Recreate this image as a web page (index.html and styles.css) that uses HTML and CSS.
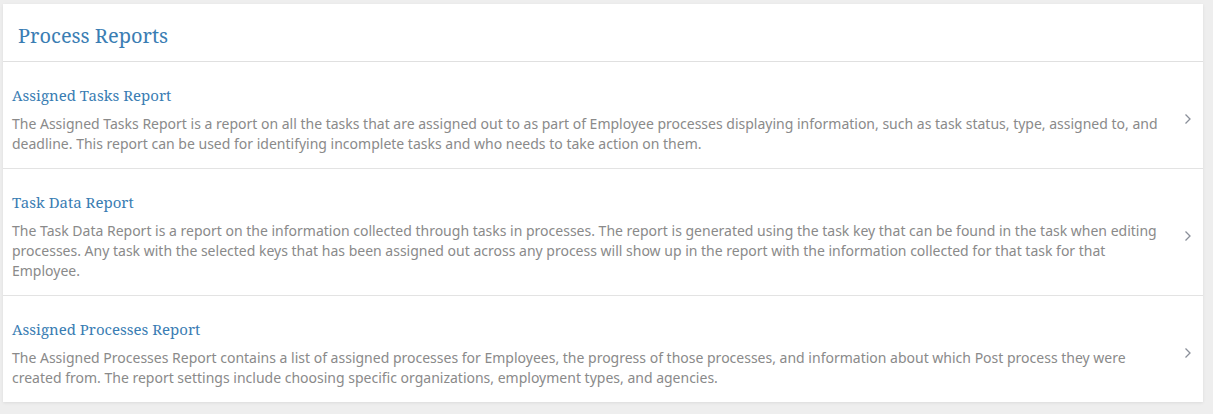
FILE: index.html
```html
<!DOCTYPE html>
<html lang="en">
<head>
<meta charset="utf-8">
<title>Process Reports</title>
<link rel="stylesheet" href="styles.css">
</head>
<body>
<div class="panel">
  <div class="panel-header">
    <h2 class="panel-title">Process Reports</h2>
  </div>
  <a class="report-item" href="#">
    <div class="report-body">
      <div class="report-title">Assigned Tasks Report</div>
      <div class="report-desc">The Assigned Tasks Report is a report on all the tasks that are assigned out to as part of Employee processes displaying information, such as task status, type, assigned to, and deadline. This report can be used for identifying incomplete tasks and who needs to take action on them.</div>
    </div>
    <svg class="chevron" width="8" height="12" viewBox="0 0 8 12"><path d="M1.5 1.5 L6 6 L1.5 10.5" fill="none" stroke="#8a8f99" stroke-width="1.3"/></svg>
  </a>
  <a class="report-item" href="#">
    <div class="report-body">
      <div class="report-title">Task Data Report</div>
      <div class="report-desc">The Task Data Report is a report on the information collected through tasks in processes. The report is generated using the task key that can be found in the task when editing processes. Any task with the selected keys that has been assigned out across any process will show up in the report with the information collected for that task for that Employee.</div>
    </div>
    <svg class="chevron" width="8" height="12" viewBox="0 0 8 12"><path d="M1.5 1.5 L6 6 L1.5 10.5" fill="none" stroke="#8a8f99" stroke-width="1.3"/></svg>
  </a>
  <a class="report-item last" href="#">
    <div class="report-body">
      <div class="report-title">Assigned Processes Report</div>
      <div class="report-desc">The Assigned Processes Report contains a list of assigned processes for Employees, the progress of those processes, and information about which Post process they were created from. The report settings include choosing specific organizations, employment types, and agencies.</div>
    </div>
    <svg class="chevron" width="8" height="12" viewBox="0 0 8 12"><path d="M1.5 1.5 L6 6 L1.5 10.5" fill="none" stroke="#8a8f99" stroke-width="1.3"/></svg>
  </a>
</div>
</body>
</html>
```
FILE: styles.css
```css
html, body {
  margin: 0;
  padding: 0;
}
body {
  background: #eeeeee;
  padding: 4px 10px 12px 3px;
  font-family: "Noto Sans", "Open Sans", sans-serif;
}
.panel {
  background: #ffffff;
  width: 1200px;
  box-shadow: 0 1px 3px rgba(0, 0, 0, 0.08);
}
.panel-header {
  height: 57px;
  border-bottom: 1px solid #e0e0e0;
  padding: 0 15px;
  display: flex;
  align-items: center;
}
.panel-title {
  margin: 0;
  font-family: "Noto Serif", "DejaVu Serif", serif;
  font-weight: normal;
  font-size: 20px;
  color: #3a7db3;
  padding-top: 5px;
}
.report-item {
  display: flex;
  align-items: center;
  padding: 22px 9px 14px 9px;
  border-bottom: 1px solid #e3e3e3;
  text-decoration: none;
}
.report-item.last {
  border-bottom: none;
}
.report-body {
  flex: 1;
  padding-right: 10px;
}
.report-title {
  font-family: "Noto Serif", "DejaVu Serif", serif;
  font-size: 15px;
  line-height: 22px;
  color: #3a7db3;
  margin-bottom: 8px;
}
.report-desc {
  font-size: 14px;
  line-height: 20px;
  color: #8a8a8a;
}
.chevron {
  flex: none;
  margin-right: 2px;
}
```
